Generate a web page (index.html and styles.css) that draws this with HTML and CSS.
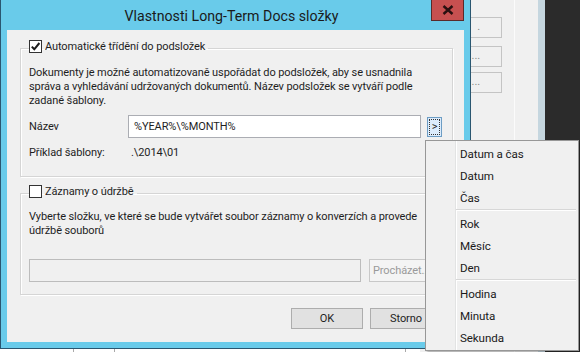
FILE: index.html
```html
<!DOCTYPE html>
<html lang="cs">

<head>
    <meta charset="UTF-8">
    <title>Vlastnosti Long-Term Docs složky</title>
    <link rel="stylesheet" href="styles.css">
</head>

<body>
    <div class="desktop">
        <!-- Background application window -->
        <div class="backapp">
            <div class="list">
                <div class="col col-a"></div>
                <div class="col col-b"></div>
                <div class="col col-c"></div>
                <div class="col col-d"></div>
            </div>
            <div class="side">
                <div class="side-buttons">
                    <div class="side-btn">.</div>
                    <div class="side-btn">...</div>
                    <div class="side-btn">...</div>
                </div>
                <div class="side-rest"></div>
            </div>
            <div class="strip"></div>
            <div class="dark"></div>
        </div>

        <!-- Dialog -->
        <div class="dialog">
            <div class="titlebar">
                <span class="title">Vlastnosti Long-Term Docs složky</span>
                <div class="close">
                    <svg width="12" height="10" viewBox="0 0 12 10">
                        <path d="M1.5 1 L10.5 9 M10.5 1 L1.5 9" stroke="#2a1010" stroke-width="2.4" />
                    </svg>
                </div>
            </div>

            <div class="panel">
                <fieldset class="group group-sort">
                    <legend class="legend">
                        <span class="check checked">
                            <svg width="11" height="11" viewBox="0 0 11 11">
                                <path d="M1.8 5.6 L4.3 8.3 L9.4 2" fill="none" stroke="#1c1c1c" stroke-width="2" />
                            </svg>
                        </span>
                        <span class="legend-text">Automatické třídění do podsložek</span>
                    </legend>
                    <p class="desc nowrap">Dokumenty je možné automatizovaně uspořádat do podsložek, aby se usnadnila<br>správa a vyhledávání udržovaných dokumentů. Název podsložek se vytváří podle<br>zadané šablony.</p>
                    <div class="row-name">
                        <span class="label">Název</span>
                        <div class="textbox">%YEAR%\%MONTH%</div>
                        <div class="arrow-btn"><span>&gt;</span></div>
                    </div>
                    <div class="row-example">
                        <span class="label label-wide">Příklad šablony:</span>
                        <span>.\2014\01</span>
                    </div>
                </fieldset>

                <fieldset class="group group-log">
                    <legend class="legend">
                        <span class="check"></span>
                        <span class="legend-text">Záznamy o údržbě</span>
                    </legend>
                    <p class="desc nowrap">Vyberte složku, ve které se bude vytvářet soubor záznamy o konverzích a provede<br>údržbě souborů</p>
                    <div class="row-folder">
                        <div class="textbox disabled"></div>
                        <div class="btn btn-disabled">Procházet...</div>
                    </div>
                </fieldset>

                <div class="buttons">
                    <div class="btn">OK</div>
                    <div class="btn">Storno</div>
                </div>
            </div>
        </div>

        <!-- Insert menu -->
        <div class="menu">
            <div class="menu-item">Datum a čas</div>
            <div class="menu-item">Datum</div>
            <div class="menu-item">Čas</div>
            <div class="menu-sep"></div>
            <div class="menu-item">Rok</div>
            <div class="menu-item">Měsíc</div>
            <div class="menu-item">Den</div>
            <div class="menu-sep"></div>
            <div class="menu-item">Hodina</div>
            <div class="menu-item">Minuta</div>
            <div class="menu-item">Sekunda</div>
        </div>
    </div>
</body>

</html>
```

FILE: styles.css
```css
/* Reset */
* {
    margin: 0;
    padding: 0;
    box-sizing: border-box;
}

body {
    width: 580px;
    height: 352px;
    overflow: hidden;
    font-family: Roboto, 'Noto Sans', sans-serif;
    font-size: 11px;
    letter-spacing: -0.1px;
    color: #1e1e1e;
    background: #fff;
}

.desktop {
    position: relative;
    width: 580px;
    height: 352px;
}

/* Background application */
.backapp {
    position: absolute;
    inset: 0;
    display: flex;
}

.list {
    width: 420px;
    display: flex;
    background: #fff;
}

.col {
    border-right: 1px solid #a9a9a9;
}

.col-a { width: 74px; }
.col-b { width: 41px; }
.col-c { width: 291px; }
.col-d { flex: 1; border-right: none; }

.side {
    width: 118px;
    display: flex;
    background: #f0f0f0;
}

.side-buttons {
    width: 94px;
    padding-top: 17px;
}

.side-btn {
    width: 76px;
    height: 21px;
    margin-left: 6px;
    margin-bottom: 8px;
    border: 1px solid #c4c4c4;
    background: #f0f0f0;
    color: #8a8a8a;
    text-align: right;
    padding-right: 21px;
    line-height: 18px;
}

.side-btn + .side-btn + .side-btn {
    margin-top: -3px;
}

.side-rest {
    flex: 1;
    border-left: 1px solid #fbfbfb;
}

.strip {
    width: 7px;
    background: #c5d6df;
}

.dark {
    flex: 1;
    background: #2b2b2b;
}

/* Dialog window */
.dialog {
    position: absolute;
    left: 0;
    top: 0;
    width: 471px;
    height: 349px;
    display: flex;
    flex-direction: column;
    background: #69cbea;
    border: 1px solid #2a5670;
    border-top: none;
    padding: 0 6px 6px 6px;
}

.titlebar {
    position: relative;
    height: 30px;
    display: flex;
    align-items: center;
    justify-content: center;
}

.title {
    font-size: 14.2px;
    letter-spacing: 0;
    color: #1a1a1a;
    margin-right: 8px;
    margin-top: 1px;
}

.close {
    position: absolute;
    top: 0;
    right: 0;
    width: 33px;
    height: 21px;
    background: #c75050;
    border: 1px solid #5a2a2a;
    border-top: none;
    display: flex;
    align-items: center;
    justify-content: center;
}

.panel {
    flex: 1;
    background: #f0f0f0;
    padding: 10px 11px 0 13px;
    display: flex;
    flex-direction: column;
}

/* Group boxes */
.group {
    border: 1px solid #d5d5d5;
    box-shadow: inset 1px 1px 0 #fff, 1px 1px 0 #fff;
    padding: 10px 8px 16px 8px;
    min-width: 0;
}

.group-log {
    margin-top: 8px;
    padding: 9px 8px 12px 8px;
}

.legend {
    height: 16px;
    display: flex;
    align-items: flex-start;
    padding-right: 3px;
}

.check {
    width: 13px;
    height: 13px;
    border: 1px solid #333;
    background: #fff;
    display: flex;
    align-items: center;
    justify-content: center;
}

.legend-text {
    margin-left: 3px;
    line-height: 13px;
}

.desc {
    line-height: 14px;
}

.nowrap {
    white-space: nowrap;
}

.row-name {
    display: flex;
    align-items: center;
    margin-top: 7px;
}

.label {
    width: 99px;
}

.label-wide {
    width: 102px;
}

.textbox {
    width: 293px;
    height: 23px;
    border: 1px solid #abadb3;
    background: #fff;
    padding-left: 5px;
    line-height: 21px;
}

.arrow-btn {
    width: 15px;
    height: 20px;
    margin-left: 6px;
    border: 1px solid #6d9dc4;
    background: #dcecfc;
    padding: 1px;
}

.arrow-btn span {
    display: block;
    height: 100%;
    border: 1px dotted #333;
    text-align: center;
    line-height: 14px;
}

.row-example {
    display: flex;
    margin-top: 8px;
    line-height: 14px;
}

.row-folder {
    display: flex;
    margin-top: 21px;
    gap: 8px;
}

.textbox.disabled {
    width: 332px;
    background: #f0f0f0;
    border-color: #bcbcbc;
}

/* Buttons */
.btn {
    width: 72px;
    height: 21px;
    border: 1px solid #adadad;
    background: #e1e1e1;
    text-align: center;
    line-height: 19px;
}

.btn-disabled {
    width: 75px;
    height: 23px;
    background: #f4f4f4;
    border-color: #c8c8c8;
    color: #9a9a9a;
    text-align: left;
    padding-left: 3px;
    line-height: 21px;
    overflow: hidden;
}

.buttons {
    display: flex;
    justify-content: flex-end;
    gap: 7px;
    margin-top: 13px;
    margin-right: 11px;
}

/* Popup menu */
.menu {
    position: absolute;
    left: 425px;
    top: 140px;
    width: 154px;
    height: 211px;
    border: 1px solid #979797;
    background-color: #f0f0f0;
    background-image: linear-gradient(to right, transparent 29px, #e2e3e3 29px, #e2e3e3 30px, #fff 30px, #fff 31px, transparent 31px);
    padding: 2px 2px 1px 2px;
    box-shadow: 2px 2px 2px rgba(0, 0, 0, 0.25);
    font-size: 11.6px;
}

.menu-item {
    height: 22px;
    line-height: 22px;
    padding-left: 32px;
    color: #1a1a1a;
}

.menu-sep {
    height: 4px;
    margin-left: 28px;
    border-top: 1px solid #d7d7d7;
    box-shadow: inset 0 1px 0 #fff;
}
```
